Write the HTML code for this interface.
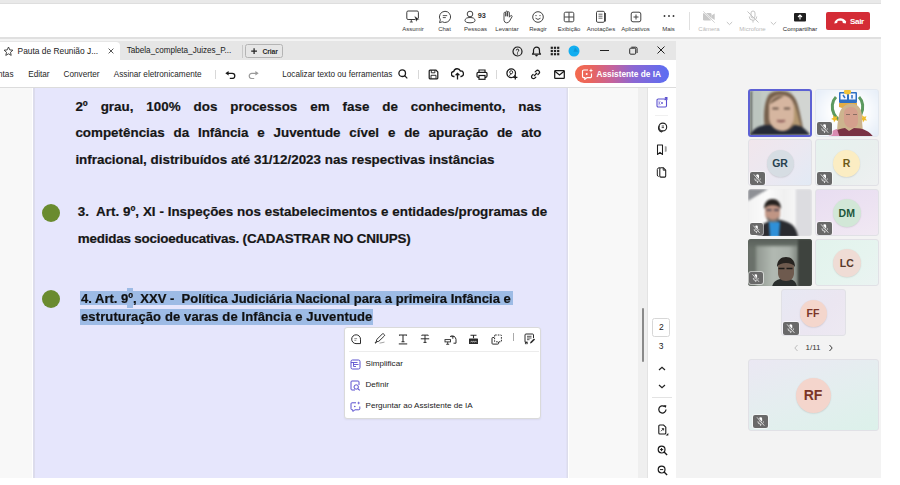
<!DOCTYPE html>
<html><head><meta charset="utf-8">
<style>
*{margin:0;padding:0;box-sizing:border-box}
html,body{width:900px;height:485px;overflow:hidden;background:#fff;font-family:"Liberation Sans",sans-serif}
.a{position:absolute}
#app{position:absolute;left:0;top:0;width:881px;height:478px;background:#f3f3f3;overflow:hidden}
#top{left:0;top:0;width:881px;height:4px;background:#e9e9e9;border-bottom:1px solid #dedede}
#tb{left:0;top:4px;width:881px;height:33px;background:#fff}
#tbl{left:0;top:37px;width:881px;height:2.3px;background:#e0e0e0}
#tbl2{left:0;top:39px;width:881px;height:2px;background:#f4f4f4}
.ti{position:absolute;top:0;height:33px;text-align:center}
.ti svg{position:absolute;left:50%;top:7px;transform:translateX(-50%)}
.ti span{position:absolute;left:-20px;right:-20px;top:21.7px;font-size:6px;color:#363636;white-space:nowrap;text-align:center}
.dis span{color:#b9b9b9}
/* acrobat */
#tabs{left:0;top:41px;width:676px;height:19px;background:#e6e6e6}
#tab1{left:0;top:1px;width:120px;height:18px;background:#fff;border-radius:0 4px 0 0}
.tt{position:absolute;font-size:8.4px;color:#222;white-space:nowrap}
#acbar{left:0;top:60px;width:676px;height:28px;background:#fff;border-bottom:1px solid #dcdcdc}
.mt{position:absolute;top:10.2px;font-size:8.2px;color:#262626;white-space:nowrap}
#doc{left:0;top:88px;width:638px;height:390px;background:#f8f8f8}
#page{left:32px;top:0;width:537px;height:390px;background:#e6e6fc;border-left:1px solid #fff;border-right:1.5px solid #fff;box-shadow:inset 2px 0 0 #dcdcec,inset -1.5px 0 0 #dcdcec}
#strack{left:638px;top:88px;width:9px;height:390px;background:#efefef}
#sline{left:647px;top:88px;width:1px;height:390px;background:#e3e3e3}
#side{left:648px;top:88px;width:28px;height:390px;background:#fff}
#gal{left:676px;top:41px;width:205px;height:437px;background:#f3f3f3}
.p{position:absolute;font-weight:bold;color:#161616;-webkit-text-stroke:0.2px currentColor;white-space:nowrap;font-size:13.4px;line-height:13.4px}
.j{text-align:justify;text-align-last:justify;white-space:normal;height:14px;overflow:visible}
.dot{width:18px;height:18px;border-radius:50%;background:#6a8b2f}
.hl{background:#9dbbe5}
.mi{font-size:8.1px;color:#222;white-space:nowrap;line-height:9px}
.tile{position:absolute;border:1px solid #e1e1e6;border-radius:3px;overflow:hidden}
.vid{border:none}
.bl{position:absolute;filter:blur(1px)}
.bl2{position:absolute;filter:blur(1.5px)}
.av{position:absolute;border-radius:50%;box-shadow:0 .6px 1.5px rgba(0,0,0,.13);text-align:center;font-weight:bold;font-family:"Liberation Sans",sans-serif}
.mb{position:absolute;background:#696969;border-radius:2px;box-shadow:0 0 0 .8px rgba(255,255,255,.7)}
.mb svg{position:absolute;left:0;top:0}
.s4{font-size:12px;line-height:12px;color:#111;transform-origin:0 0}
</style></head><body>
<div id="app">
  <div id="top" class="a"></div>

  <div id="tb" class="a">
    <div class="ti" style="left:413px"><svg width="16" height="14" viewBox="0 0 16 14" style="top:6.2px"><rect x="1.8" y="1" width="11.6" height="8.5" rx="1.3" fill="none" stroke="#3a3a3a" stroke-width="1"/><path d="M4.8 12h3M6.3 9.6V12" stroke="#3a3a3a" stroke-width=".9"/><path d="M9.2 5.8l5.6 3.6-2.3.4-1.2 2.3z" fill="#1a1a1a" stroke="#fff" stroke-width=".5"/></svg><span>Assumir</span></div>
    <div class="ti" style="left:444.5px"><svg width="14" height="14" viewBox="0 0 14 14" style="top:6.2px"><path d="M7 1.3a5.6 5.6 0 1 1-2.7 10.5L1.5 12.6l.8-2.7A5.6 5.6 0 0 1 7 1.3z" fill="none" stroke="#424242" stroke-width="1"/><path d="M4.8 5.6h4.4M4.8 7.6h3" stroke="#424242" stroke-width="0.9"/></svg><span>Chat</span></div>
    <div class="ti" style="left:475.5px"><svg width="24" height="14" viewBox="0 0 24 14" style="top:6.2px"><circle cx="6" cy="4" r="2.8" fill="none" stroke="#424242" stroke-width="1"/><path d="M1 10.5c0-2 2-3 5-3s5 1 5 3c0 1.5-2 2.3-5 2.3s-5-.8-5-2.3z" fill="none" stroke="#424242" stroke-width="1"/><text x="13.8" y="8.2" font-family="Liberation Sans" font-size="7.3" font-weight="bold" fill="#333">93</text></svg><span>Pessoas</span></div>
    <div class="ti" style="left:507px"><svg width="14" height="14" viewBox="0 0 14 14" style="top:6.2px"><path d="M4 7V3.2a.9.9 0 0 1 1.8 0V6.5M5.8 6V2a.9.9 0 0 1 1.8 0v4.3M7.6 6.3V2.6a.9.9 0 0 1 1.8 0v4.6M9.4 7.2l1.2-1.5a.9.9 0 0 1 1.4 1.1L9.6 11a3.2 3.2 0 0 1-2.8 1.8H6.5A2.8 2.8 0 0 1 4 10.3V7" fill="none" stroke="#424242" stroke-width="0.95"/></svg><span>Levantar</span></div>
    <div class="ti" style="left:538px"><svg width="14" height="14" viewBox="0 0 14 14" style="top:6.2px"><circle cx="7" cy="7" r="5.3" fill="none" stroke="#424242" stroke-width="1"/><circle cx="5" cy="5.6" r=".7" fill="#424242"/><circle cx="9" cy="5.6" r=".7" fill="#424242"/><path d="M4.5 8.2q2.5 2.5 5 0" fill="none" stroke="#424242" stroke-width="0.95"/></svg><span>Reagir</span></div>
    <div class="ti" style="left:569px"><svg width="14" height="14" viewBox="0 0 14 14" style="top:6.2px"><rect x="2.2" y="2.2" width="9.6" height="9.6" rx="1.5" fill="none" stroke="#424242" stroke-width="1"/><path d="M7 2.4v9.2M2.4 7h9.2" stroke="#424242" stroke-width="1"/></svg><span>Exibição</span></div>
    <div class="ti" style="left:601px"><svg width="14" height="14" viewBox="0 0 14 14" style="top:6.2px"><rect x="2.5" y="1.3" width="8" height="11" rx="1.3" fill="none" stroke="#424242" stroke-width="1"/><path d="M11.5 3v8.5" stroke="#424242" stroke-width="0.9"/><path d="M4.5 4.2h4M4.5 6.2h4M4.5 8.2h4" stroke="#424242" stroke-width="0.8"/></svg><span>Anotações</span></div>
    <div class="ti" style="left:635.5px"><svg width="14" height="14" viewBox="0 0 14 14" style="top:6.2px"><rect x="2.2" y="2.2" width="9.6" height="9.6" rx="1.8" fill="none" stroke="#424242" stroke-width="1"/><path d="M7 4.5v5M4.5 7h5" stroke="#424242" stroke-width="1"/></svg><span>Aplicativos</span></div>
    <div class="ti" style="left:668.5px"><svg width="14" height="14" viewBox="0 0 14 14" style="top:6.2px"><circle cx="2.5" cy="6" r=".95" fill="#333"/><circle cx="7" cy="6" r=".95" fill="#333"/><circle cx="11.5" cy="6" r=".95" fill="#333"/></svg><span>Mais</span></div>
    <div class="a" style="left:689px;top:8px;width:1px;height:18px;background:#e0e0e0"></div>
    <div class="ti dis" style="left:709px"><svg width="14" height="14" viewBox="0 0 14 14" style="top:6px"><rect x="1" y="3" width="8.5" height="7.5" rx="1.3" fill="#c8c8c8"/><path d="M9.5 5.5l3.2-2v6.5l-3.2-2z" fill="#c8c8c8"/><path d="M1 1l12 12" stroke="#fff" stroke-width="1.6"/><path d="M1.3 1.3l11.4 11.4" stroke="#c8c8c8" stroke-width=".8"/></svg><span>Câmera</span></div>
    <svg class="a" style="left:726px;top:17px" width="7" height="5" viewBox="0 0 7 5"><path d="M.8 1l2.7 2.6L6.2 1" fill="none" stroke="#bdbdbd" stroke-width=".9"/></svg>
    <div class="ti dis" style="left:752.5px"><svg width="14" height="14" viewBox="0 0 14 14" style="top:6px"><rect x="5" y="1" width="4" height="7" rx="2" fill="none" stroke="#c4c4c4" stroke-width="1"/><path d="M3.2 6.5a3.8 3.8 0 0 0 7.6 0M7 10.3v2.3" fill="none" stroke="#c4c4c4" stroke-width="1"/><path d="M1.5 1.5l11 11" stroke="#c4c4c4" stroke-width="1"/></svg><span>Microfone</span></div>
    <svg class="a" style="left:770px;top:17px" width="7" height="5" viewBox="0 0 7 5"><path d="M.8 1l2.7 2.6L6.2 1" fill="none" stroke="#bdbdbd" stroke-width=".9"/></svg>
    <div class="ti" style="left:800px"><svg width="14" height="12" viewBox="0 0 14 12" style="top:8px"><rect x="1" y="1" width="12" height="8.5" rx="1" fill="#1f1f1f"/><path d="M7 7.5V3M5 5l2-2 2 2" fill="none" stroke="#fff" stroke-width="1.1"/></svg><span style="color:#242424">Compartilhar</span></div>
    <div class="a" style="left:826px;top:8px;width:44.3px;height:17.7px;background:#d42c36;border-radius:2px">
      <svg class="a" style="left:7.5px;top:4.8px" width="13" height="8" viewBox="0 0 13 8"><path d="M.8 4.6C2.5 2.3 4.5 1.3 6.5 1.3s4 1 5.7 3.3l-.5 2-2.8-.5-.6-2c-.9-.5-3.7-.5-4.6 0l-.6 2-2.8.5z" fill="#fff"/></svg>
      <span class="a" style="left:24px;top:4.8px;font-size:8.1px;font-weight:bold;color:#fff;line-height:9px;letter-spacing:-0.35px">Sair</span>
    </div>
  </div>
  <div id="tbl" class="a"></div>
  <div id="tbl2" class="a"></div>
  <div id="tabs" class="a">
    <div id="tab1" class="a"></div>
    <svg class="a" style="left:3px;top:4.5px" width="11" height="11" viewBox="0 0 11 11"><path d="M5.5 1l1.3 2.9 3.1.3-2.4 2.1.7 3.1-2.7-1.6-2.7 1.6.7-3.1L1.1 4.2l3.1-.3z" fill="none" stroke="#333" stroke-width=".9" stroke-linejoin="round"/></svg>
    <span class="tt" style="left:17.6px;top:5px">Pauta de Reunião J...</span>
    <svg class="a" style="left:108px;top:7px" width="6" height="6" viewBox="0 0 6 6"><path d="M.6.6l4.8 4.8M5.4.6L.6 5.4" stroke="#444" stroke-width=".9"/></svg>
    <span class="tt" style="left:126.7px;top:5.2px;font-size:8.15px">Tabela_completa_Juizes_P...</span>
    <div class="a" style="left:241.5px;top:3.5px;width:1px;height:13px;background:#c8c8c8"></div>
    <div class="a" style="left:245px;top:3px;width:37.5px;height:14px;border:1px solid #b4b4b4;border-radius:2.5px"></div>
    <svg class="a" style="left:250.8px;top:6.9px" width="6.2" height="6.2" viewBox="0 0 6.2 6.2"><path d="M3.1.2v5.8M.2 3.1h5.8" stroke="#222" stroke-width="1.25"/></svg>
    <span class="tt" style="left:262.6px;top:6.5px;font-size:6.9px;font-weight:bold;letter-spacing:-0.2px;color:#2a2a2a">Criar</span>
    <svg class="a" style="left:512px;top:5px" width="11" height="11" viewBox="0 0 11 11"><circle cx="5.5" cy="5.5" r="4.5" fill="none" stroke="#1a1a1a" stroke-width="1.2"/><path d="M4.3 4.4a1.25 1.25 0 1 1 1.8 1.1c-.4.3-.6.5-.6 1" fill="none" stroke="#1a1a1a" stroke-width="1"/><circle cx="5.5" cy="7.9" r=".6" fill="#1a1a1a"/></svg>
    <svg class="a" style="left:531px;top:5px" width="11" height="11" viewBox="0 0 11 11"><path d="M5.5 1.2a3 3 0 0 1 3 3v2.5l1 1.5h-8l1-1.5V4.2a3 3 0 0 1 3-3z" fill="none" stroke="#1a1a1a" stroke-width="1.2" stroke-linejoin="round"/><path d="M4.2 9.1a1.3 1.3 0 0 0 2.6 0z" fill="#1a1a1a"/></svg>
    <svg class="a" style="left:550.3px;top:5px" width="10" height="10" viewBox="0 0 10 10"><g fill="#222"><rect x=".7" y=".7" width="2.2" height="2.2"/><rect x="3.9" y=".7" width="2.2" height="2.2"/><rect x="7.1" y=".7" width="2.2" height="2.2"/><rect x=".7" y="3.9" width="2.2" height="2.2"/><rect x="3.9" y="3.9" width="2.2" height="2.2"/><rect x="7.1" y="3.9" width="2.2" height="2.2"/><rect x=".7" y="7.1" width="2.2" height="2.2"/><rect x="3.9" y="7.1" width="2.2" height="2.2"/><rect x="7.1" y="7.1" width="2.2" height="2.2"/></g></svg>
    <svg class="a" style="left:568px;top:4px" width="12" height="12" viewBox="0 0 12 12"><circle cx="6" cy="6" r="5.5" fill="#12aef0"/><path d="M7 2.5l3.3 4.3H5.5z" fill="#0a86c8" opacity=".6"/></svg>
    <div class="a" style="left:600px;top:9.2px;width:9px;height:1.2px;background:#222"></div>
    <svg class="a" style="left:628.5px;top:5px" width="9" height="9" viewBox="0 0 9 9"><rect x=".7" y="2.2" width="6" height="6" rx="1" fill="none" stroke="#222" stroke-width=".95"/><path d="M2.3 1.2h4.5a1.3 1.3 0 0 1 1.3 1.3v4.5" fill="none" stroke="#222" stroke-width=".95"/></svg>
    <svg class="a" style="left:656.7px;top:4.6px" width="8" height="8" viewBox="0 0 8 8"><path d="M.5.5l7 7M7.5.5l-7 7" stroke="#222" stroke-width="1"/></svg>
  </div>
  <div id="acbar" class="a">
    <span class="mt" style="left:-2px">ntas</span>
    <span class="mt" style="left:28.2px">Editar</span>
    <span class="mt" style="left:63.6px">Converter</span>
    <span class="mt" style="left:113.8px">Assinar eletronicamente</span>
    <div class="a" style="left:215px;top:10px;width:1px;height:9px;background:#d8d8d8"></div>
    <svg class="a" style="left:224.5px;top:10.5px" width="11" height="8" viewBox="0 0 11 8"><path d="M.3 2.3L3.6.1v4.4z" fill="#1a1a1a"/><path d="M3 2.3h4.2a2.6 2.6 0 0 1 0 5.2H4.8" fill="none" stroke="#1a1a1a" stroke-width="1.3"/></svg>
    <svg class="a" style="left:248.3px;top:10.5px" width="11" height="8" viewBox="0 0 11 8"><path d="M10.7 2.3L7.4.1v4.4z" fill="#9a9a9a"/><path d="M8 2.3H3.8a2.6 2.6 0 0 0 0 5.2h2.4" fill="none" stroke="#9a9a9a" stroke-width="1.2"/></svg>
    <span class="mt" style="left:282.2px">Localizar texto ou ferramentas</span>
    <svg class="a" style="left:397.5px;top:9px" width="10" height="10" viewBox="0 0 10 10"><circle cx="4.2" cy="4.2" r="3.3" fill="none" stroke="#1a1a1a" stroke-width="1.3"/><path d="M6.6 6.6L9.3 9.3" stroke="#1a1a1a" stroke-width="1.2"/></svg>
    <div class="a" style="left:418px;top:10px;width:1px;height:9px;background:#d8d8d8"></div>
    <svg class="a" style="left:427.5px;top:8.5px" width="11" height="11" viewBox="0 0 11 11"><path d="M1.2 2a.8.8 0 0 1 .8-.8h6l1.8 1.8v6a.8.8 0 0 1-.8.8H2a.8.8 0 0 1-.8-.8z" fill="none" stroke="#1a1a1a" stroke-width="1.2"/><path d="M3.3 1.3v2.5h3.6V1.3M3 9.6V6.3h5v3.3" fill="none" stroke="#1a1a1a" stroke-width=".9"/></svg>
    <svg class="a" style="left:451px;top:8px" width="13" height="12" viewBox="0 0 13 12"><path d="M3.5 8.5H3a2.5 2.5 0 0 1-.3-5A3.5 3.5 0 0 1 9.4 3a2.7 2.7 0 0 1 .6 5.5h-.6" fill="none" stroke="#1a1a1a" stroke-width="1.3"/><path d="M6.5 11.5V5.5M4.6 7.3l1.9-1.9 1.9 1.9" fill="none" stroke="#1a1a1a" stroke-width="1.3"/></svg>
    <svg class="a" style="left:475.5px;top:8.5px" width="12" height="11" viewBox="0 0 12 11"><path d="M3 3.2V1h6v2.2" fill="none" stroke="#1a1a1a" stroke-width="1.2"/><rect x="1" y="3.3" width="10" height="5" rx="1.2" fill="none" stroke="#1a1a1a" stroke-width="1.2"/><rect x="3" y="6.5" width="6" height="3.8" fill="#fff" stroke="#1a1a1a" stroke-width="1.2"/></svg>
    <div class="a" style="left:496px;top:10px;width:1px;height:9px;background:#d8d8d8"></div>
    <svg class="a" style="left:505.5px;top:8px" width="12" height="12" viewBox="0 0 12 12"><circle cx="5.2" cy="5.2" r="4.3" fill="none" stroke="#1a1a1a" stroke-width="1.25"/><circle cx="5.2" cy="4.2" r="1.5" fill="none" stroke="#1a1a1a" stroke-width=".9"/><path d="M2.7 8.3c.8-1.3 1.6-1.8 2.5-1.8" fill="none" stroke="#1a1a1a" stroke-width=".9"/><path d="M9.3 7.2v4.2M7.2 9.3h4.2" stroke="#1a1a1a" stroke-width="1.3"/></svg>
    <svg class="a" style="left:530px;top:8.5px" width="11" height="11" viewBox="0 0 11 11"><path d="M4.3 6.7l2.4-2.4M5.2 2.9l1-1a1.9 1.9 0 0 1 2.7 2.7l-1 1M5.8 8.1l-1 1a1.9 1.9 0 0 1-2.7-2.7l1-1" fill="none" stroke="#1a1a1a" stroke-width="1.25" stroke-linecap="round"/></svg>
    <svg class="a" style="left:553.5px;top:9.5px" width="11" height="9" viewBox="0 0 11 9"><rect x=".7" y=".7" width="9.6" height="7.6" rx=".6" fill="none" stroke="#1a1a1a" stroke-width="1.25"/><path d="M.9 1.2l4.6 3.7 4.6-3.7" fill="none" stroke="#1a1a1a" stroke-width="1.25"/></svg>
    <div class="a" style="left:574.5px;top:4.6px;width:94.5px;height:18.7px;border-radius:9.4px;background:linear-gradient(90deg,#f46a4e 0%,#e9655e 17%,#c4629c 40%,#8b67d3 62%,#5b6df3 100%)"></div>
    <svg class="a" style="left:581px;top:8px" width="13" height="12" viewBox="0 0 13 12"><path d="M7 2H2.8A1.3 1.3 0 0 0 1.5 3.3v5a1.3 1.3 0 0 0 1.3 1.3h1v1.8l2.2-1.8h3.2a1.3 1.3 0 0 0 1.3-1.3V5.5" fill="none" stroke="#fff" stroke-width="1.15"/><path d="M10 .3l.6 1.6 1.6.6-1.6.6-.6 1.6-.6-1.6-1.6-.6 1.6-.6z" fill="#fff"/><circle cx="5.7" cy="6" r="1" fill="#fff"/></svg>
    <span class="a" style="left:596.5px;top:9px;font-size:8.3px;font-weight:bold;color:#fff;white-space:nowrap">Assistente de IA</span>
  </div>
  <div id="doc" class="a"><div id="page" class="a"></div></div>
  <div class="p j" style="left:75.4px;top:100.4px;width:466px">2º grau, 100% dos processos em fase de conhecimento, nas</div>
  <div class="p j" style="left:75.4px;top:126.2px;width:466px">competências da Infância e Juventude cível e de apuração de ato</div>
  <div class="p" id="l3" style="left:75.4px;top:152.5px">infracional, distribuídos até 31/12/2023 nas respectivas instâncias</div>
  <div class="a dot" style="left:41.7px;top:204.2px"></div>
  <div class="p j" style="left:77.7px;top:205.4px;width:469.5px">3.&nbsp; Art. 9º, XI - Inspeções nos estabelecimentos e entidades/programas de</div>
  <div class="p" id="l5" style="left:77.7px;top:231.8px;letter-spacing:-0.19px">medidas socioeducativas. (CADASTRAR NO CNIUPS)</div>
  <div class="a dot" style="left:41.7px;top:290.2px"></div>
  <div class="a hl" style="left:79.8px;top:290.9px;width:432.9px;height:14.4px"></div>
  <div class="a hl" style="left:126.9px;top:288.2px;width:6.2px;height:19.7px"></div>
  <div class="a hl" style="left:79.8px;top:309.3px;width:293.5px;height:15.3px"></div>
  <div class="p s4" id="l6" style="left:80.6px;top:292.9px;transform:scaleX(1.085)">4. Art. 9º, XXV -&nbsp; Política Judiciária Nacional para a primeira Infância e</div>
  <div class="p s4" id="l7" style="left:80.6px;top:310.6px;transform:scaleX(1.085);letter-spacing:0.1px">estruturação de varas de Infância e Juventude</div>

  <div class="a" id="pop" style="left:344px;top:326.7px;width:197px;height:92px;background:#fff;border:1px solid #dadada;border-radius:3px;box-shadow:0 1px 2px rgba(0,0,0,.06)">
    <svg class="a" style="left:5px;top:6px" width="12" height="11" viewBox="0 0 12 11"><path d="M10.5 9.6H6a4.4 4.4 0 1 1 4.5-4.4z" fill="none" stroke="#2a2a2a" stroke-width="1"/><path d="M4.3 4.6h2.8M4.3 6.3h2" stroke="#777" stroke-width=".8"/></svg>
    <svg class="a" style="left:29px;top:5.5px" width="12" height="11" viewBox="0 0 12 11"><path d="M2.2 8.8l.6-2.4L8.3 1a1 1 0 0 1 1.4 0l.6.6a1 1 0 0 1 0 1.4L4.8 8.3z" fill="none" stroke="#2a2a2a" stroke-width=".95" stroke-linejoin="round"/><path d="M1 10.2l1.5-1.3" stroke="#2a2a2a" stroke-width="1.2"/><path d="M5.5 10.1q2.5-.3 5-1" stroke="#999" stroke-width=".9" fill="none"/></svg>
    <svg class="a" style="left:53px;top:6.2px" width="10" height="11" viewBox="0 0 10 11"><path d="M1.5 1.8V1h7v.8M5 1v6.8M3.5 7.8h3" fill="none" stroke="#2a2a2a" stroke-width="1.05"/><path d="M.8 9.9h8.4" stroke="#555" stroke-width="1.3"/></svg>
    <svg class="a" style="left:75.3px;top:6px" width="10" height="10" viewBox="0 0 10 10"><path d="M1.8 1.8V1.1h6.4v.7M5 1.1v7.3M3.5 8.4h3M.8 4.8h8.4" fill="none" stroke="#2a2a2a" stroke-width="1"/></svg>
    <svg class="a" style="left:98.5px;top:6px" width="13" height="11" viewBox="0 0 13 11"><path d="M6 2.6A3.8 3.8 0 0 1 12 5.5v3.7H9.5" fill="none" stroke="#2a2a2a" stroke-width="1"/><path d="M7.2 2.6h3.2M8.8 2.6v2.2" stroke="#2a2a2a" stroke-width=".9"/><rect x="1" y="5.6" width="5.5" height="2.3" fill="none" stroke="#2a2a2a" stroke-width=".9"/><path d="M3.7 7.9v2.2M2.2 10.3h3" stroke="#2a2a2a" stroke-width=".9"/></svg>
    <svg class="a" style="left:123px;top:6.3px" width="11" height="11" viewBox="0 0 11 11"><path d="M2.5 1.3h6M5.5 1.3v3" stroke="#2a2a2a" stroke-width="1.1"/><rect x="1" y="4.5" width="9" height="5.5" rx=".6" fill="#2a2a2a"/><path d="M2.6 8.3l1-1.4 1 1.4 1-1.4 1 1.4 1-1.4 1 1.4" fill="none" stroke="#fff" stroke-width=".6"/></svg>
    <svg class="a" style="left:146px;top:6px" width="12" height="11" viewBox="0 0 12 11"><path d="M3 3.5H1.8a.8.8 0 0 0-.8.8v5a.8.8 0 0 0 .8.8h5a.8.8 0 0 0 .8-.8V8" fill="none" stroke="#2a2a2a" stroke-width="1"/><rect x="3.6" y="1" width="6.8" height="6.8" rx=".5" fill="none" stroke="#2a2a2a" stroke-width="1" stroke-dasharray="1.6 1.1"/></svg>
    <div class="a" style="left:167.5px;top:5.8px;width:1px;height:7.5px;background:#aaa"></div>
    <svg class="a" style="left:179px;top:5.5px" width="12" height="12" viewBox="0 0 12 12"><path d="M3 9.5H2a1 1 0 0 1-1-1V2a1 1 0 0 1 1-1h6.5a1 1 0 0 1 1 1v3" fill="none" stroke="#2a2a2a" stroke-width="1"/><path d="M3 3.3h4.5M3 5h4.5M3 6.7h2.5" stroke="#2a2a2a" stroke-width=".8"/><path d="M6 10.5l.4-1.6 3.5-3.5 1.2 1.2-3.5 3.5z" fill="#2a2a2a"/><rect x="1.3" y="9" width="2" height="1.8" fill="none" stroke="#2a2a2a" stroke-width=".7"/></svg>
    <div class="a" style="left:3.5px;top:23.6px;width:190px;height:1px;background:#ececec"></div>
    <svg class="a" style="left:5px;top:31.5px" width="11" height="11" viewBox="0 0 11 11"><rect x="1" y="1" width="9" height="9" rx="1.5" fill="none" stroke="#5b50cf" stroke-width="1"/><path d="M1 3.5h6.5M3.5 5.5h5M3.5 7.5h2.5M3.5 3.5v4" fill="none" stroke="#5b50cf" stroke-width=".9"/></svg>
    <span class="a mi" style="left:20.5px;top:31.5px">Simplificar</span>
    <svg class="a" style="left:5px;top:52.5px" width="11" height="11" viewBox="0 0 11 11"><path d="M5 10H2a1 1 0 0 1-1-1V2a1 1 0 0 1 1-1h6a1 1 0 0 1 1 1v3" fill="none" stroke="#5b50cf" stroke-width="1"/><circle cx="6.2" cy="7" r="2.2" fill="none" stroke="#5b50cf" stroke-width="1"/><path d="M7.8 8.6l2 1.8" stroke="#5b50cf" stroke-width="1.1"/></svg>
    <span class="a mi" style="left:20.5px;top:52.3px">Definir</span>
    <svg class="a" style="left:5px;top:73px" width="11" height="11" viewBox="0 0 11 11"><path d="M6 1.8H2a1 1 0 0 0-1 1v5a1 1 0 0 0 1 1h.8v1.6L5 8.8h3.8a1 1 0 0 0 1-1V5.5" fill="none" stroke="#5b50cf" stroke-width="1"/><path d="M8.7.3l.4 1.3 1.3.4-1.3.4-.4 1.3-.4-1.3L7 2l1.3-.4z" fill="#5b50cf"/><circle cx="4.8" cy="5.5" r=".8" fill="#5b50cf"/></svg>
    <span class="a mi" style="left:20.5px;top:73.5px">Perguntar ao Assistente de IA</span>
  </div>
  <div id="strack" class="a"></div>
  <div id="sline" class="a"></div>
  <div id="side" class="a">
    <svg class="a" style="left:7.5px;top:9px" width="12" height="11" viewBox="0 0 12 11"><rect x="1" y="2" width="9.5" height="8" rx="1.2" fill="#fff" stroke="#5b50cf" stroke-width="1.1"/><path d="M3 3.5v5M4.5 4.5l-1.5 1.5 1.5 1.5" fill="none" stroke="#8a82dd" stroke-width=".8"/><circle cx="6" cy="6" r=".9" fill="#5b50cf"/><path d="M8.5 0h3v3.3l-1-1-1.5 1.2-.7-.7 1.2-1.5z" fill="#5b50cf"/></svg>
    <div class="a" style="left:7px;top:26.5px;width:13px;height:1px;background:#f0f0f0"></div>
    <svg class="a" style="left:7.5px;top:33.5px" width="12" height="11" viewBox="0 0 12 11"><circle cx="6.8" cy="5" r="3.9" fill="#fff" stroke="#1e1e1e" stroke-width="1.1"/><path d="M3.2 4A3.9 3.9 0 0 0 5.5 10l1-.9" fill="none" stroke="#1e1e1e" stroke-width="1.1"/><path d="M5.7 4h2.3M5.7 5.6h2.3" stroke="#1e1e1e" stroke-width=".8"/></svg>
    <svg class="a" style="left:8px;top:55.5px" width="11" height="12" viewBox="0 0 11 12"><path d="M1.5 1h5v9.5L4 8.3 1.5 10.5z" fill="none" stroke="#1e1e1e" stroke-width="1.05" stroke-linejoin="round"/><path d="M9.2 2.5v1M9.2 4.5v1M9.2 6.5v1M10 2.5v5" stroke="#444" stroke-width=".7"/></svg>
    <svg class="a" style="left:8px;top:77.5px" width="11" height="12" viewBox="0 0 11 12"><path d="M4 1.8A2.2 2.2 0 0 0 1.3 3.5v5.5a1.6 1.6 0 0 0 1.3 1.5" fill="none" stroke="#1e1e1e" stroke-width="1"/><path d="M3.8 2.8a1 1 0 0 1 1-1h2.6l2.3 2.3v6a1 1 0 0 1-1 1H4.8a1 1 0 0 1-1-1z" fill="#fff" stroke="#1e1e1e" stroke-width="1.05"/><path d="M7.2 1.9v2.3h2.3" fill="none" stroke="#1e1e1e" stroke-width=".9"/></svg>
    <div class="a" style="left:4.3px;top:230.2px;width:18.2px;height:18.5px;border:1px solid #d7d7d7;border-radius:2.5px;background:#fff"></div>
    <span class="a" style="left:11px;top:233.5px;font-size:8.5px;color:#222;line-height:10px">2</span>
    <span class="a" style="left:10.8px;top:253px;font-size:8.5px;color:#222;line-height:10px">3</span>
    <svg class="a" style="left:10px;top:278px" width="8" height="5" viewBox="0 0 8 5"><path d="M1 4l3-2.8L7 4" fill="none" stroke="#222" stroke-width="1.2"/></svg>
    <svg class="a" style="left:10px;top:295.5px" width="8" height="5" viewBox="0 0 8 5"><path d="M1 1l3 2.8L7 1" fill="none" stroke="#222" stroke-width="1.2"/></svg>
    <div class="a" style="left:4px;top:309px;width:19.5px;height:1px;background:#e3e3e3"></div>
    <svg class="a" style="left:8.5px;top:315.5px" width="11" height="11" viewBox="0 0 11 11"><path d="M9 5.6A3.6 3.6 0 1 1 7.7 2.7" fill="none" stroke="#1a1a1a" stroke-width="1.25"/><path d="M6.4 1.2l2.9.1-.4 2.8z" fill="#1a1a1a"/></svg>
    <svg class="a" style="left:8.5px;top:335.5px" width="12" height="12" viewBox="0 0 12 12"><path d="M1.8 2a1 1 0 0 1 1-1h3.8l2.2 2.2v5.8a1 1 0 0 1-1 1h-5a1 1 0 0 1-1-1z" fill="none" stroke="#1a1a1a" stroke-width="1.1"/><path d="M4 7.2l2.6-2.6M6.6 6.4V4.6H4.8" fill="none" stroke="#1a1a1a" stroke-width=".85"/><path d="M11.3 9v2.6H8.7z" fill="#1a1a1a"/></svg>
    <svg class="a" style="left:8.5px;top:356.5px" width="11" height="11" viewBox="0 0 11 11"><circle cx="4.6" cy="4.6" r="3.4" fill="none" stroke="#1a1a1a" stroke-width="1.2"/><path d="M7.1 7.1l3 3" stroke="#1a1a1a" stroke-width="1.4"/><path d="M4.6 3v3.2M3 4.6h3.2" stroke="#1a1a1a" stroke-width="1"/></svg>
    <svg class="a" style="left:8.5px;top:377px" width="11" height="11" viewBox="0 0 11 11"><circle cx="4.6" cy="4.6" r="3.4" fill="none" stroke="#1a1a1a" stroke-width="1.2"/><path d="M7.1 7.1l3 3" stroke="#1a1a1a" stroke-width="1.4"/><path d="M3 4.6h3.2" stroke="#1a1a1a" stroke-width="1"/></svg>
  </div>
  <div class="a" style="left:641.5px;top:308.3px;width:2.6px;height:54px;background:#8a8a8a;border-radius:1.3px"></div>
  <div id="gal" class="a"></div>
  <!-- tile 1 -->
  <div class="tile vid" style="left:748px;top:89.2px;width:64px;height:47.5px;background:#c3cbc5;border:2px solid #5d61d4">
    <div class="bl" style="left:0;top:0;width:3px;height:48px;background:#6f7570"></div>
    <div class="bl" style="left:3px;top:0;width:8px;height:48px;background:#bcc5bf"></div>
    <div class="bl" style="left:42px;top:0;width:22px;height:48px;background:#d2d5d2"></div>
    <svg class="a" style="left:0;top:0;filter:blur(.8px)" width="60" height="44" viewBox="0 0 60 44">
      <path d="M15 38C13 26 14 12 18 5 20 1 25 0 31 0c7 0 12 3 15 9 4 9 5 22 9 35H15z" fill="#76604c"/>
      <path d="M44 12c4 9 5 20 10 32H42z" fill="#b39770"/>
      <path d="M19 15c0-7 5-11 12-11 8 0 13 5 13 12v9c0 9-6 15-12 15-7 0-13-6-13-14z" fill="#d6b6a0"/>
      <path d="M20 12c3-5 8-8 14-7-4 2-9 5-14 8z" fill="#76604c"/>
      <path d="M22.5 17.5h6M34 17.5h6" stroke="#4e3c32" stroke-width="1.7"/>
      <path d="M27 29.5c2.5 1.2 5.5 1.2 8 0" stroke="#9a6662" stroke-width="2"/>
      <path d="M0 44c3-6 8-9 15-10h6c3 4 7 6 12 6s8-2 11-6c7 0 12 4 16 10z" fill="#252a36"/>
    </svg>
  </div>
  <!-- tile 2 -->
  <div class="tile vid" style="left:814.6px;top:89.2px;width:64px;height:47.5px;background:#eef3fa;border:1px solid #e3e8ef">
    <div class="bl" style="left:0;top:0;width:64px;height:48px;background:radial-gradient(ellipse at 50% 45%,#ffffff 35%,#dfe9f6 100%)"></div>
    <svg class="a" style="left:0;top:0;filter:blur(.6px)" width="64" height="48" viewBox="0 0 64 48">
      <path d="M20 7c-4 4-5 11-2 17s8 8 12 9M43 7c4 4 5 11 2 17s-8 8-12 9" fill="none" stroke="#5c9a5f" stroke-width="3"/>
      <rect x="23" y="2" width="18" height="11" rx="1" fill="#2f6fc2"/>
      <path d="M24.5 3.5h6.5v6h-6.5zM33 3.5h6.5v6H33z" fill="#f5f7ff"/>
      <path d="M27 5l2 3M36 5v3.5" stroke="#2f6fc2" stroke-width="1.5"/>
      <path d="M23 13h18v4l-9 3-9-3z" fill="#e2ad45"/>
      <ellipse cx="31.5" cy="1.8" rx="3.6" ry="2.6" fill="#f3c33a"/>
      <path d="M17 25l2 1.8 2.5-.6-1 2.4 1.5 2-2.6-.3L18 32.5l-.5-2.5-2.4-1 2.2-1.3z" fill="#efbc2c"/>
      <path d="M46 25l2 1.8 2.5-.6-1 2.4 1.5 2-2.6-.3L47 32.5l-.5-2.5-2.4-1 2.2-1.3z" fill="#efbc2c"/>
      <path d="M21 48c0-12 1-25 5-30 3-4 8-5 12-4 5 1 8 6 8 13 0 8 1 14 2 21z" fill="#cdb48e"/>
      <path d="M28 24c0-5 3-7 7-7s7 3 7 8v6c0 5-3 7-7 7s-7-4-7-8z" fill="#d4a08d"/>
      <path d="M30 24.5h4M37 24.5h4" stroke="#8a6e62" stroke-width="1.2"/>
      <path d="M13 48c2-6 8-9 16-10l4 3 5-3c9 0 16 3 20 10z" fill="#7a3244"/>
      <path d="M12 48c1-5 4-8 9-9l3 9z" fill="#d98ab1"/>
    </svg>
    <div class="mb" style="left:1.7px;top:32.3px;width:15px;height:12.8px"><svg width="15" height="12.8" viewBox="0 0 14 12"><rect x="5.6" y="2" width="2.8" height="5" rx="1.4" fill="#fff"/><path d="M4.4 6a2.6 2.6 0 0 0 5.2 0M7 8.6v1.6" fill="none" stroke="#eee" stroke-width=".8"/><path d="M3.6 2.2l6.8 7.8" stroke="#6a6a6a" stroke-width="1.6"/><path d="M3.6 2.2l6.8 7.8" stroke="#fff" stroke-width=".7"/></svg></div>
  </div>
  <!-- GR -->
  <div class="tile" style="left:748px;top:139px;width:64px;height:47px;background:linear-gradient(135deg,#f1e6ec 0%,#ebe8f1 55%,#e2eaf5 100%)">
    <div class="av" style="left:17.5px;top:9.8px;width:27px;height:27px;background:#d6dde3;color:#27424f;font-size:10.5px;line-height:27px">GR</div>
    <div class="mb" style="left:1.2px;top:31.5px;width:15px;height:13px"><svg width="15" height="13" viewBox="0 0 14 12"><rect x="5.6" y="2" width="2.8" height="5" rx="1.4" fill="#fff"/><path d="M4.4 6a2.6 2.6 0 0 0 5.2 0M7 8.6v1.6" fill="none" stroke="#eee" stroke-width=".8"/><path d="M3.6 2.2l6.8 7.8" stroke="#6a6a6a" stroke-width="1.6"/><path d="M3.6 2.2l6.8 7.8" stroke="#fff" stroke-width=".7"/></svg></div>
  </div>
  <!-- R -->
  <div class="tile" style="left:814.6px;top:139px;width:64px;height:47px;background:linear-gradient(135deg,#e6f2ee 0%,#e9efee 60%,#eef0f1 100%)">
    <div class="av" style="left:17.4px;top:9.8px;width:27px;height:27px;background:#fbedc3;color:#6d5a17;font-size:10.5px;line-height:27px">R</div>
    <div class="mb" style="left:1.2px;top:31.5px;width:15px;height:13px"><svg width="15" height="13" viewBox="0 0 14 12"><rect x="5.6" y="2" width="2.8" height="5" rx="1.4" fill="#fff"/><path d="M4.4 6a2.6 2.6 0 0 0 5.2 0M7 8.6v1.6" fill="none" stroke="#eee" stroke-width=".8"/><path d="M3.6 2.2l6.8 7.8" stroke="#6a6a6a" stroke-width="1.6"/><path d="M3.6 2.2l6.8 7.8" stroke="#fff" stroke-width=".7"/></svg></div>
  </div>
  <!-- tile 5 video man -->
  <div class="tile vid" style="left:748px;top:189.2px;width:64px;height:47.2px;background:#eeeef0">
    <div class="bl" style="left:0;top:0;width:48px;height:48px;background:linear-gradient(90deg,#f3f3f3,#fbfbfb 40%,#f0f0f0 75%,#f6f6f6)"></div>
    <div class="bl" style="left:48px;top:0;width:16px;height:48px;background:#dcdce0"></div>
    <svg class="a" style="left:0;top:0;filter:blur(.8px)" width="64" height="48" viewBox="0 0 64 48">
      <path d="M0 0h20L0 12z" fill="#8e9095"/>
      <path d="M9 48c1-8 4-13 10-15l6-2h8l6 2c6 2 10 7 11 15z" fill="#2a2b30"/>
      <path d="M21 33h11l-1 15H22z" fill="#2f90d8"/>
      <path d="M17 19c0-5 3-8 7-8s8 3 8 8v6c0 5-3 8-7 8s-8-3-8-8z" fill="#c09584"/>
      <path d="M16 20c0-7 4-10 8.5-10S33 13 33 20c-2-3-5-4-8.5-4S18 17 16 20z" fill="#25211f"/>
      <path d="M18.5 21h5M26 21h5" stroke="#3a3a4a" stroke-width="1.3"/>
      <path d="M19 27c2 5 10 5 12 0v4c-2 3-10 3-12 0z" fill="#77706c"/>
    </svg>
    <div class="mb" style="left:2.2px;top:33.5px;width:13px;height:12.3px"><svg width="13" height="12.3" viewBox="0 0 14 12"><rect x="5.6" y="2" width="2.8" height="5" rx="1.4" fill="#fff"/><path d="M4.4 6a2.6 2.6 0 0 0 5.2 0M7 8.6v1.6" fill="none" stroke="#eee" stroke-width=".8"/><path d="M3.6 2.2l6.8 7.8" stroke="#6a6a6a" stroke-width="1.6"/><path d="M3.6 2.2l6.8 7.8" stroke="#fff" stroke-width=".7"/></svg></div>
  </div>
  <!-- DM -->
  <div class="tile" style="left:814.6px;top:189.2px;width:64px;height:47.2px;background:linear-gradient(160deg,#e8ddf1 0%,#ede3f2 55%,#f1e9f3 100%)">
    <div class="av" style="left:17.2px;top:8.6px;width:28px;height:28px;background:#d2e7d7;color:#1d563a;font-size:10.5px;line-height:28px">DM</div>
    <div class="mb" style="left:1.4px;top:32.2px;width:15.4px;height:12.8px"><svg width="15.4" height="12.8" viewBox="0 0 14 12"><rect x="5.6" y="2" width="2.8" height="5" rx="1.4" fill="#fff"/><path d="M4.4 6a2.6 2.6 0 0 0 5.2 0M7 8.6v1.6" fill="none" stroke="#eee" stroke-width=".8"/><path d="M3.6 2.2l6.8 7.8" stroke="#6a6a6a" stroke-width="1.6"/><path d="M3.6 2.2l6.8 7.8" stroke="#fff" stroke-width=".7"/></svg></div>
  </div>
  <!-- tile 7 dark man -->
  <div class="tile vid" style="left:748px;top:239.3px;width:64px;height:47.2px;background:#5f665f">
    <div class="bl" style="left:0;top:0;width:64px;height:48px;background:linear-gradient(180deg,#59605a 0%,#6a716a 20%,#6a706a 100%)"></div>
    <div class="bl2" style="left:8px;top:7px;width:42px;height:42px;background:linear-gradient(90deg,#8f978f,#b2b9b2 40%,#a9b0a9 80%,#7d847d)"></div>
    <div class="bl" style="left:50px;top:0;width:14px;height:48px;background:#3e433e"></div>
    <svg class="a" style="left:0;top:0;filter:blur(.7px)" width="64" height="48" viewBox="0 0 64 48">
      <path d="M24 48c1-5 4-7 8-8h10c4 1 6 3 7 8z" fill="#2a2e2c"/>
      <path d="M30 29c0-6 3-9 8-9s8 3 8 9v5c0 5-3 8-8 8s-8-3-8-8z" fill="#6e5a4e"/>
      <path d="M29 28c0-7 4-10 9-10s9 3 9 10c-2-3-5-4-9-4s-7 1-9 4z" fill="#262320"/>
      <path d="M30.5 29.5h6M38.5 29.5h6" stroke="#1e1c1a" stroke-width="1.6"/>
    </svg>
    <div class="mb" style="left:1.2px;top:32.5px;width:13.5px;height:12px"><svg width="13.5" height="12" viewBox="0 0 14 12"><rect x="5.6" y="2" width="2.8" height="5" rx="1.4" fill="#fff"/><path d="M4.4 6a2.6 2.6 0 0 0 5.2 0M7 8.6v1.6" fill="none" stroke="#eee" stroke-width=".8"/><path d="M3.6 2.2l6.8 7.8" stroke="#6a6a6a" stroke-width="1.6"/><path d="M3.6 2.2l6.8 7.8" stroke="#fff" stroke-width=".7"/></svg></div>
  </div>
  <!-- LC -->
  <div class="tile" style="left:814.6px;top:239.3px;width:64px;height:47.2px;background:linear-gradient(135deg,#e2f3ec 0%,#e6f4ef 60%,#ebf3f2 100%)">
    <div class="av" style="left:17.2px;top:8.5px;width:28px;height:28px;background:#efdcd5;color:#58392b;font-size:10.5px;line-height:28px">LC</div>
  </div>
  <!-- FF -->
  <div class="tile" style="left:781px;top:288.8px;width:64.5px;height:47.4px;background:linear-gradient(135deg,#e7e8f3 0%,#ebe6f1 60%,#ede9f2 100%)">
    <div class="av" style="left:17.5px;top:10.3px;width:27px;height:27px;background:#f4d6cc;color:#7b3527;font-size:10.5px;line-height:27px">FF</div>
    <div class="mb" style="left:1.4px;top:32px;width:15.5px;height:13px"><svg width="15.5" height="13" viewBox="0 0 14 12"><rect x="5.6" y="2" width="2.8" height="5" rx="1.4" fill="#fff"/><path d="M4.4 6a2.6 2.6 0 0 0 5.2 0M7 8.6v1.6" fill="none" stroke="#eee" stroke-width=".8"/><path d="M3.6 2.2l6.8 7.8" stroke="#6a6a6a" stroke-width="1.6"/><path d="M3.6 2.2l6.8 7.8" stroke="#fff" stroke-width=".7"/></svg></div>
  </div>
  <svg class="a" style="left:793px;top:343.5px" width="6" height="8" viewBox="0 0 6 8"><path d="M4.5 1L1.8 4l2.7 3" fill="none" stroke="#b5b5b5" stroke-width=".9"/></svg>
  <span class="a" style="left:805.5px;top:343px;font-size:8px;color:#333;line-height:9px">1/11</span>
  <svg class="a" style="left:828px;top:343.5px" width="6" height="8" viewBox="0 0 6 8"><path d="M1.5 1l2.7 3-2.7 3" fill="none" stroke="#333" stroke-width=".95"/></svg>
  <!-- RF -->
  <div class="tile" style="left:748px;top:359.2px;width:131px;height:72.3px;background:linear-gradient(160deg,#ebe8f3 0%,#e4eeef 50%,#dcf1ea 100%)">
    <div class="av" style="left:46.5px;top:18.2px;width:35px;height:35px;background:#f4d5cc;color:#7b3527;font-size:14px;line-height:35px">RF</div>
    <div class="mb" style="left:4.0px;top:55.3px;width:15.3px;height:12.8px"><svg width="15.3" height="12.8" viewBox="0 0 14 12"><rect x="5.6" y="2" width="2.8" height="5" rx="1.4" fill="#fff"/><path d="M4.4 6a2.6 2.6 0 0 0 5.2 0M7 8.6v1.6" fill="none" stroke="#eee" stroke-width=".8"/><path d="M3.6 2.2l6.8 7.8" stroke="#6a6a6a" stroke-width="1.6"/><path d="M3.6 2.2l6.8 7.8" stroke="#fff" stroke-width=".7"/></svg></div>
  </div>
</div>
</body></html>
